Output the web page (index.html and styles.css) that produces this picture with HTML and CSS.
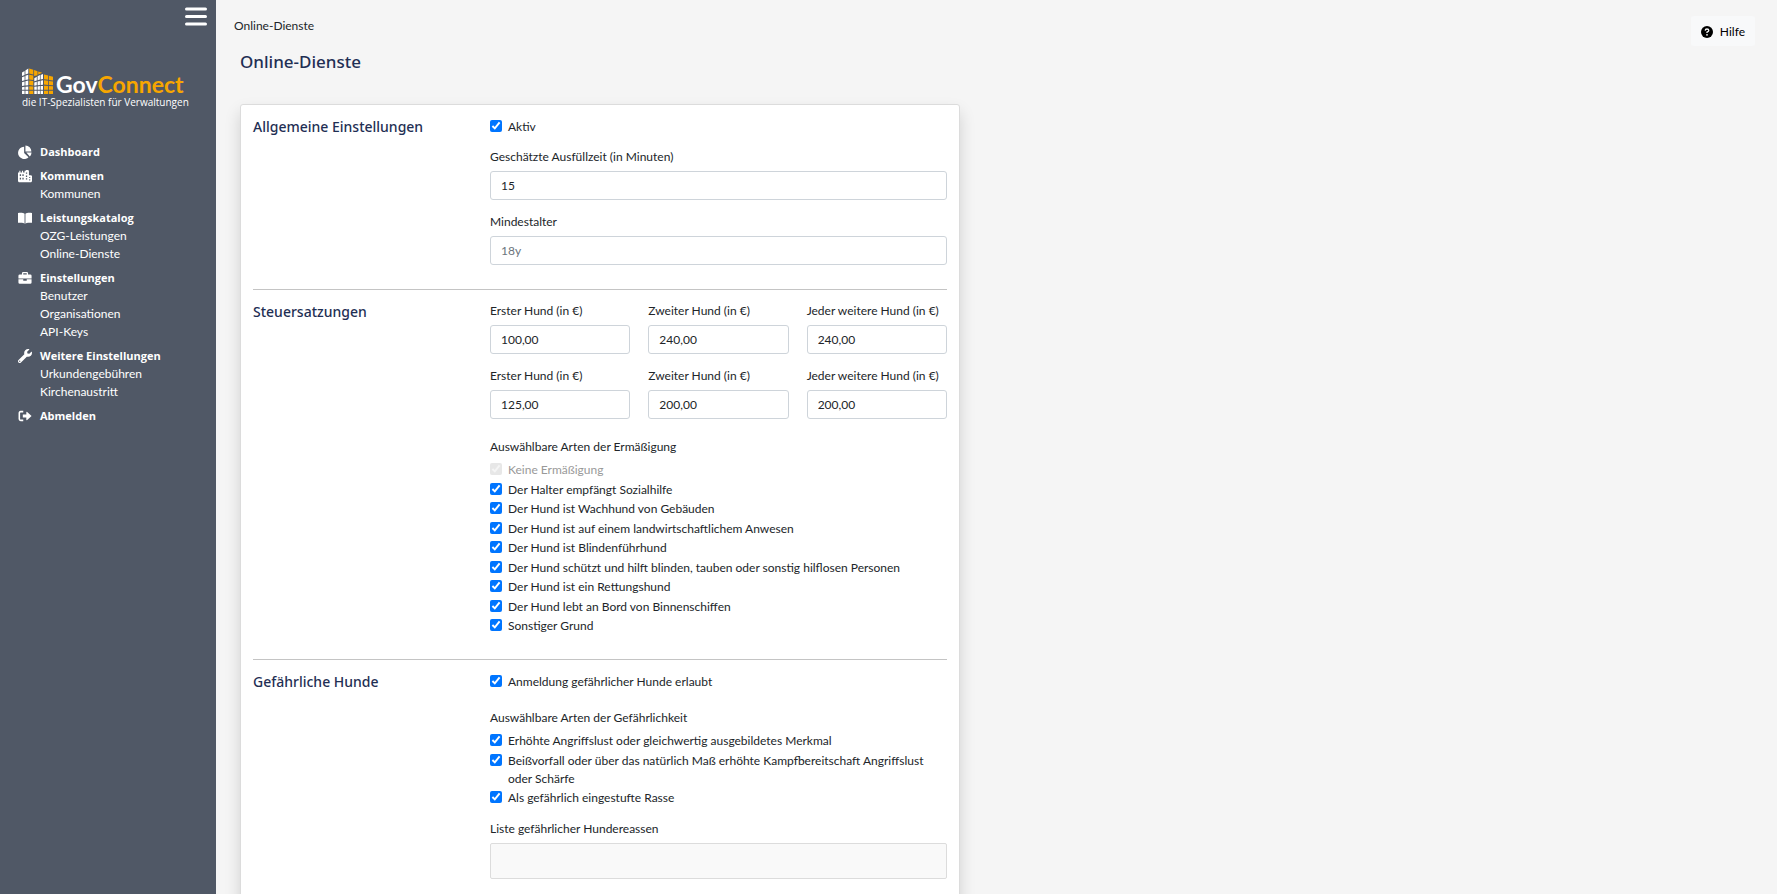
FILE: index.html
```html
<!DOCTYPE html>
<html lang="de">
<head>
<meta charset="utf-8">
<meta name="viewport" content="width=device-width, initial-scale=1">
<title>Online-Dienste</title>
<link rel="stylesheet" href="styles.css">
</head>
<body>
<div class="app">
  <aside class="sidebar">
    <button class="menu-toggle" type="button" aria-label="Menü">
      <svg width="22" height="19" viewBox="0 0 22 19" aria-hidden="true"><path d="M1.5 2h19M1.5 9.5h19M1.5 17h19" stroke="#fff" stroke-width="3" stroke-linecap="round"/></svg>
    </button>
    <a class="logo" href="#">
      <span class="logo-row">
        <svg class="logo-mark" width="31" height="27" viewBox="0 0 31 27" aria-hidden="true">
          <g fill="#fff">
            <path d="M0 4.5L2.6 3v4L0 8zM3.4 2.400L6.300.500v5L3.400 6.600zM0 9.200L2.600 8.200v4L0 13zM3.400 7.800L6.300 6.800v4.600l-2.900.7zM0 14.200l2.600-.7v4L0 18zM3.400 13.300l2.900-.7v4.600l-2.900.3zM0 19.200l2.600-.4v3H0zM3.400 18.700l2.900-.3v3.400H3.400zM0 22.800h2.600V26H0zM3.400 22.800h2.900V26H3.400z"/>
            <path d="M12.300 10.200l2.500-1.500v3.800l-2.500.8zM15.600 8.300l2.300-1.300v4.500l-2.300.7zM18.600 6.900L21 6v5l-2.400.4zM12.300 14.500l2.500-.7v3.500l-2.500.4zM15.600 13.600l2.300-.6v4l-2.300.3zM18.600 12.700l2.400-.4v4.400l-2.400.3zM12.300 18.800l2.500-.3v3.300h-2.500zM15.600 18.400l2.300-.3v3.700h-2.300zM18.600 18.100l2.400-.2v3.900h-2.400zM12.300 22.800h2.500V26h-2.500zM15.600 22.800h2.300V26h-2.300zM18.600 22.800H21V26h-2.400z"/>
          </g>
          <g fill="#f7a600">
            <path d="M7.200.500l4.100 1.300v4.600L7.200 5.500zM12.100 2l3.400 1.200v4L12.100 8zM16.200 3.600l4 1.200-2.800 1.200-1.200.5zM7.200 6.700l4.100.8v4.500l-4.100-.6zM7.200 12.600l4.100.5v4.300l-4.100-.3zM7.200 18.300l4.100.2v3.300H7.200zM7.200 22.800h4.100V26H7.200z"/>
            <path d="M22 6.500l4.200 1v4.300L22 11.200zM27 7.800l4 1v3.800l-4-.7zM22 12.300l4.200.5v4.100l-4.200-.3zM27 13l4 .6v3.600l-4-.3zM22 17.800l4.200.2v3.800H22zM27 18.100l4 .2v3.500h-4zM22 22.800h4.200V26H22zM27 22.800h4V26h-4z"/>
          </g>
        </svg>
        <span class="logo-name">Gov<span class="logo-accent">Connect</span></span>
      </span>
      <span class="logo-claim">die IT-Spezialisten für Verwaltungen</span>
    </a>
    <nav class="nav">
      <div class="nav-group">
        <a class="nav-head" href="#"><svg class="nav-icon" viewBox="0 0 16 16" aria-hidden="true"><path fill="#fff" d="M7 2v7l5 5A7 7 0 1 1 7 2zM8.500.5A6.800 6.800 0 0 1 15.300 7.300H8.500zM9.500 8.700h6a6.500 6.500 0 0 1-2 4.500z"/></svg>Dashboard</a>
      </div>
      <div class="nav-group">
        <a class="nav-head" href="#"><svg class="nav-icon" viewBox="0 0 16 14" aria-hidden="true"><path fill="#fff" fill-rule="evenodd" d="M0 3h1.500V1h1.300v2h1.700V1h1.300v2h1.700V1h1L9.500 0h2l1 1V6h2.500l1 1v6l-1 1H1l-1-1zM2 5v2h1.500V5zM5 5v2h1.500V5zM9 3v1.500h1.500V3zM9 6.500V8h1.500V6.500zM2 9v2h1.500V9zM5 9v2h1.500V9zM9 9.500V11h1.500V9.500zM12.800 8v1.300H14V8zM12.800 10.700V12H14v-1.300z"/></svg>Kommunen</a>
        <a class="nav-link" href="#">Kommunen</a>
      </div>
      <div class="nav-group">
        <a class="nav-head" href="#"><svg class="nav-icon" viewBox="0 0 16 16" aria-hidden="true"><path fill="#fff" d="M7.500 3v11.500C6 13.500 3 13.500 0 13.500V2.300C3 2 6 2 7.500 3zM8.500 3v11.500c1.500-1 4-1 7.500-1V2.300C13 2 10 2 8.500 3z"/></svg>Leistungskatalog</a>
        <a class="nav-link" href="#">OZG-Leistungen</a>
        <a class="nav-link" href="#">Online-Dienste</a>
      </div>
      <div class="nav-group">
        <a class="nav-head" href="#"><svg class="nav-icon" viewBox="0 0 16 16" aria-hidden="true"><path fill="#fff" fill-rule="evenodd" d="M4.500 4V2.500Q4.500 1 6 1h4q1.500 0 1.500 1.500V4H14q1.500 0 1.500 1.500V8.500H.500V5.500Q.500 4 2 4zM6 4h4V2.500H6zM.500 9.500H6v1.500h4V9.500h5.500v3.500q0 1.500-1.500 1.500H2q-1.500 0-1.500-1.500z"/></svg>Einstellungen</a>
        <a class="nav-link" href="#">Benutzer</a>
        <a class="nav-link" href="#">Organisationen</a>
        <a class="nav-link" href="#">API-Keys</a>
      </div>
      <div class="nav-group">
        <a class="nav-head" href="#"><svg class="nav-icon" viewBox="0 0 512 512" aria-hidden="true"><path fill="#fff" d="M507.730 109.100c-2.240-9.030-13.540-12.090-20.120-5.510l-74.360 74.360-67.880-11.310-11.310-67.880 74.360-74.360c6.620-6.620 3.430-17.900-5.660-20.160-47.380-11.740-99.550.910-136.580 37.930-39.640 39.640-50.550 97.100-34.050 147.200L18.740 402.760c-24.990 24.990-24.990 65.510 0 90.500 24.990 24.990 65.510 24.990 90.500 0l213.210-213.210c50.120 16.710 107.470 5.680 147.370-34.220 37.070-37.070 49.700-89.320 37.910-136.730zM64 472c-13.250 0-24-10.750-24-24 0-13.260 10.750-24 24-24s24 10.740 24 24c0 13.250-10.750 24-24 24z"/></svg>Weitere Einstellungen</a>
        <a class="nav-link" href="#">Urkundengebühren</a>
        <a class="nav-link" href="#">Kirchenaustritt</a>
      </div>
      <div class="nav-group">
        <a class="nav-head" href="#"><svg class="nav-icon" viewBox="0 0 16 16" aria-hidden="true"><path d="M6 3H3Q1.500 3 1.500 4.500v7Q1.500 13 3 13h3" fill="none" stroke="#fff" stroke-width="1.800"/><path fill="#fff" d="M5.500 6.200H9.500V3.600q.300-.8 1-.3L15.500 8l-5 4.700q-.8.500-1-.3V9.800h-4z"/></svg>Abmelden</a>
      </div>
    </nav>
  </aside>

  <main class="main">
    <header class="topbar">
      <nav class="breadcrumb" aria-label="Breadcrumb">Online-Dienste</nav>
      <button class="help" type="button"><svg width="12" height="12" viewBox="0 0 12 12" aria-hidden="true"><circle cx="6" cy="6" r="6" fill="#000"/><path d="M4.200 4.600Q4.300 3 6 3t1.800 1.500Q7.800 5.400 6 6.200V7" fill="none" stroke="#f8f9fa" stroke-width="1.300"/><circle cx="6" cy="8.800" r=".9" fill="#f8f9fa"/></svg>Hilfe</button>
    </header>
    <h1 class="title">Online-Dienste</h1>

    <form class="card">
      <section class="section">
        <h2 class="section-title">Allgemeine Einstellungen</h2>
        <div class="fields">
          <label class="check"><input type="checkbox" checked><span>Aktiv</span></label>
          <div class="field-stack">
            <div class="field"><label for="zeit">Geschätzte Ausfüllzeit (in Minuten)</label><input class="text" id="zeit" type="text" value="15"></div>
            <div class="field"><label for="alter">Mindestalter</label><input class="text" id="alter" type="text" placeholder="18y"></div>
          </div>
        </div>
      </section>

      <section class="section">
        <h2 class="section-title">Steuersatzungen</h2>
        <div class="fields">
          <div class="field-grid">
            <div class="field"><label for="a1">Erster Hund (in €)</label><input class="text" id="a1" type="text" value="100,00"></div>
            <div class="field"><label for="a2">Zweiter Hund (in €)</label><input class="text" id="a2" type="text" value="240,00"></div>
            <div class="field"><label for="a3">Jeder weitere Hund (in €)</label><input class="text" id="a3" type="text" value="240,00"></div>
            <div class="field"><label for="b1">Erster Hund (in €)</label><input class="text" id="b1" type="text" value="125,00"></div>
            <div class="field"><label for="b2">Zweiter Hund (in €)</label><input class="text" id="b2" type="text" value="200,00"></div>
            <div class="field"><label for="b3">Jeder weitere Hund (in €)</label><input class="text" id="b3" type="text" value="200,00"></div>
          </div>
          <div class="group" role="group" aria-labelledby="erm">
            <div class="group-label" id="erm">Auswählbare Arten der Ermäßigung</div>
            <div class="checks checks-long">
              <label class="check check-disabled"><input type="checkbox" checked disabled><span>Keine Ermäßigung</span></label>
              <label class="check"><input type="checkbox" checked><span>Der Halter empfängt Sozialhilfe</span></label>
              <label class="check"><input type="checkbox" checked><span>Der Hund ist Wachhund von Gebäuden</span></label>
              <label class="check"><input type="checkbox" checked><span>Der Hund ist auf einem landwirtschaftlichem Anwesen</span></label>
              <label class="check"><input type="checkbox" checked><span>Der Hund ist Blindenführhund</span></label>
              <label class="check"><input type="checkbox" checked><span>Der Hund schützt und hilft blinden, tauben oder sonstig hilflosen Personen</span></label>
              <label class="check"><input type="checkbox" checked><span>Der Hund ist ein Rettungshund</span></label>
              <label class="check"><input type="checkbox" checked><span>Der Hund lebt an Bord von Binnenschiffen</span></label>
              <label class="check"><input type="checkbox" checked><span>Sonstiger Grund</span></label>
            </div>
          </div>
        </div>
      </section>

      <section class="section">
        <h2 class="section-title">Gefährliche Hunde</h2>
        <div class="fields">
          <label class="check"><input type="checkbox" checked><span>Anmeldung gefährlicher Hunde erlaubt</span></label>
          <div class="group" role="group" aria-labelledby="gef">
            <div class="group-label" id="gef">Auswählbare Arten der Gefährlichkeit</div>
            <div class="checks checks-short">
              <label class="check"><input type="checkbox" checked><span>Erhöhte Angriffslust oder gleichwertig ausgebildetes Merkmal</span></label>
              <label class="check"><input type="checkbox" checked><span>Beißvorfall oder über das natürlich Maß erhöhte Kampfbereitschaft Angriffslust oder Schärfe</span></label>
              <label class="check"><input type="checkbox" checked><span>Als gefährlich eingestufte Rasse</span></label>
            </div>
          </div>
          <div class="field field-list"><label for="rassen">Liste gefährlicher Hundereassen</label><textarea class="list" id="rassen" rows="1"></textarea></div>
        </div>
      </section>
    </form>
  </main>
</div>
</body>
</html>
```

FILE: styles.css
```css
* { box-sizing: border-box; }
body {
  margin: 0;
  background: #f5f5f5;
  color: #212529;
  font: 12px/18px "Segoe UI", Lato, "Noto Sans", sans-serif;
}
input, textarea, button { font: inherit; color: inherit; }
a { color: inherit; text-decoration: none; }

.app { display: flex; height: 100vh; }

/* Sidebar */
.sidebar {
  flex: 0 0 216px;
  display: flex;
  flex-direction: column;
  background: #505866;
  color: #fff;
}
.menu-toggle {
  align-self: flex-end;
  margin: 7px 9px 0 0;
  padding: 0;
  border: 0;
  background: none;
  line-height: 0;
}
.logo { display: flex; flex-direction: column; margin: 42px 20px 0 22px; }
.logo-row { display: flex; align-items: flex-end; gap: 3px; height: 27px; }
.logo-name { font: bold 23px/22px Lato, sans-serif; }
.logo-accent { color: #f7a600; }
.logo-claim { font: 10px/15px "Open Sans", sans-serif; white-space: nowrap; }
.nav { display: flex; flex-direction: column; gap: 6px; padding: 33px 18px 18px; }
.nav-group { display: flex; flex-direction: column; }
.nav-head { display: flex; align-items: center; gap: 8px; font: bold 11px/18px "Open Sans", sans-serif; }
.nav-icon { width: 14px; height: 14px; }
.nav-link { padding-left: 22px; }

/* Main area */
.main {
  flex: 1;
  min-width: 0;
  padding: 16px 22px 0 18px;
  overflow: auto;
  scrollbar-width: none;
}
.topbar { display: flex; justify-content: space-between; align-items: flex-start; }
.breadcrumb { padding-top: 1px; }
.help {
  display: flex;
  align-items: center;
  gap: 7px;
  height: 30px;
  padding: 1px 10px 0;
  border: 0;
  border-radius: 3px;
  background: #f8f9fa;
  color: #000;
}
.title { margin: 2px 6px 29px; font: 500 17px/27px "Segoe UI", "Noto Sans", sans-serif; color: #1f2f54; }

/* Settings card */
.card {
  max-width: 720px;
  margin: 0 6px 24px;
  padding: 0 12px 12px;
  border: 1px solid #dcdcdc;
  border-radius: 3px;
  background: #fff;
  box-shadow: 0 8px 16px rgba(0, 0, 0, .15);
}
.section {
  display: grid;
  grid-template-columns: 237px 1fr;
  padding: 12px 0 24px;
}
.section + .section { border-top: 1px solid #c4c4c4; }
.section-title { margin: 0; font: 500 14px/19px "Segoe UI", "Noto Sans", sans-serif; color: #1f2f54; }
.fields { min-width: 0; }
.fields > .check { padding-top: 1px; }
.field-stack { display: grid; gap: 13px; margin-top: 12px; }
.field-grid { display: grid; grid-template-columns: repeat(3, 1fr); gap: 13px 18px; }
.field { display: flex; flex-direction: column; gap: 5px; min-width: 0; }
.field-list { margin-top: 13px; }
.text {
  width: 100%;
  height: 29px;
  padding: 0 10px;
  border: 1px solid #ced4da;
  border-radius: 3px;
  background: #fff;
}
.text::placeholder { color: #6c757d; }
.list {
  width: 100%;
  height: 36px;
  padding: 8px 10px;
  border: 1px solid #dcdcdc;
  border-radius: 2px;
  background: #f9f9f9;
  resize: none;
}
.group { display: grid; gap: 5px; margin-top: 18px; }
.field-grid + .group { margin-top: 19px; }
.checks { display: flex; flex-direction: column; justify-content: space-between; }
.checks-long { min-height: 174px; }
.checks-short { min-height: 75px; }
.check { display: flex; align-items: flex-start; gap: 6px; }
.check input { flex: none; width: 12px; height: 12px; margin: 2px 0 0; accent-color: #0075ff; }
.check-disabled { color: #999; }
.check-disabled input { opacity: .5; }
```
